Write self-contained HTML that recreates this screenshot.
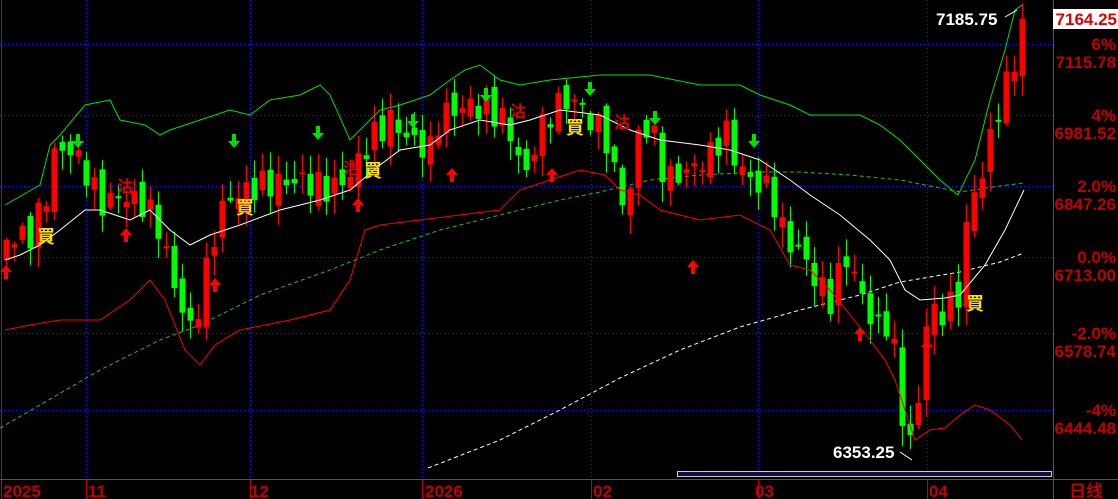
<!DOCTYPE html><html><head><meta charset="utf-8"><style>
html,body{margin:0;padding:0;background:#000;width:1118px;height:499px;overflow:hidden}
svg{display:block}
text{font-family:"Liberation Sans","Noto Sans CJK SC",sans-serif;font-weight:bold}
</style></head><body>
<svg id="s" width="1118" height="499" xmlns="http://www.w3.org/2000/svg">
<g stroke="#1a1aff" stroke-width="1" stroke-dasharray="1,3">
<line x1="0" y1="44.5" x2="1053" y2="44.5"/><line x1="0" y1="115.5" x2="1053" y2="115.5"/><line x1="0" y1="186.5" x2="1053" y2="186.5"/><line x1="0" y1="257.5" x2="1053" y2="257.5"/><line x1="0" y1="333.5" x2="1053" y2="333.5"/><line x1="0" y1="410.5" x2="1053" y2="410.5"/>
<line x1="86.5" y1="0" x2="86.5" y2="479"/><line x1="250.5" y1="0" x2="250.5" y2="479"/><line x1="422.5" y1="0" x2="422.5" y2="479"/><line x1="591.5" y1="0" x2="591.5" y2="479"/><line x1="758.5" y1="0" x2="758.5" y2="479"/><line x1="927.5" y1="0" x2="927.5" y2="479"/>
</g>
<line x1="1.5" y1="0" x2="1.5" y2="499" stroke="#c00" />
<line x1="1053.5" y1="0" x2="1053.5" y2="499" stroke="#a020a0"/>
<line x1="0" y1="479.5" x2="1118" y2="479.5" stroke="#a020a0"/>
<rect x="677.5" y="471.5" width="374" height="5" fill="#101040" stroke="#ccc"/>
<g id="c"></g>
<g fill="#c00000" font-size="17" text-anchor="end">
<text x="1116" y="50">6%</text><text x="1116" y="68">7115.78</text>
<text x="1116" y="121">4%</text><text x="1116" y="139">6981.52</text>
<text x="1116" y="192">2.0%</text><text x="1116" y="210">6847.26</text>
<text x="1116" y="263">0.0%</text><text x="1116" y="281">6713.00</text>
<text x="1116" y="339">-2.0%</text><text x="1116" y="357">6578.74</text>
<text x="1116" y="416">-4%</text><text x="1116" y="434">6444.48</text>
</g>
<rect x="1053" y="9" width="65" height="20" fill="#fff"/>
<text x="1117" y="25" fill="#e00000" font-size="17" text-anchor="end">7164.25</text>
<text x="936" y="25" fill="#fff" font-size="17">7185.75</text>
<line x1="1005" y1="17" x2="1017" y2="10" stroke="#fff"/>
<text x="833" y="458" fill="#fff" font-size="17">6353.25</text>
<line x1="900" y1="452" x2="912" y2="460" stroke="#fff"/>
<g fill="#c00000" font-size="17">
<text x="3" y="497">2025</text><text x="88" y="497">11</text><text x="250" y="497">12</text><text x="425" y="497">2026</text><text x="593" y="497">02</text><text x="755" y="497">03</text><text x="929" y="497">04</text>
<text x="1069" y="497" font-weight="normal">日线</text>
</g>
<g stroke="#c00000"><line x1="86.5" y1="480" x2="86.5" y2="499"/><line x1="250.5" y1="480" x2="250.5" y2="499"/><line x1="422.5" y1="480" x2="422.5" y2="499"/><line x1="591.5" y1="480" x2="591.5" y2="499"/><line x1="758.5" y1="480" x2="758.5" y2="499"/><line x1="927.5" y1="480" x2="927.5" y2="499"/></g>
<g font-size="18" fill="#ffe000" font-weight="bold">
<text x="37" y="243">買</text><text x="236" y="214">買</text><text x="364" y="177">買</text><text x="566" y="134">買</text><text x="966" y="310">買</text>
</g>
<g font-size="16" fill="#e00000">
<text x="117" y="192">沽</text><text x="343" y="174">沽</text><text x="510" y="117">沽</text><text x="614" y="128">沽</text>
</g>
</svg>
<script>
function interp(p,x){for(var i=1;i<p.length;i++){if(x<=p[i][0]){var a=p[i-1],b=p[i];return a[1]+(b[1]-a[1])*(x-a[0])/(b[0]-a[0]);}}return p[p.length-1][1];}
function pl(p,col,dash){var d="";for(var i=0;i<p.length;i++)d+=(i?" L":"M")+p[i][0]+","+p[i][1];return '<path d="'+d+'" fill="none" stroke="'+col+'" stroke-width="1"'+(dash?' stroke-dasharray="'+dash+'"':'')+'/>';}
var K=[[6,240],[30,235],[45,200],[55,150],[70,150],[85,170],[100,205],[120,195],[145,205],[160,230],[175,290],[190,330],[200,300],[215,230],[225,200],[260,185],[300,180],[330,190],[350,175],[370,140],[390,120],[410,140],[430,150],[440,115],[470,105],[500,115],[515,145],[525,180],[535,140],[555,105],[575,100],[590,120],[605,135],[620,200],[630,190],[640,120],[655,140],[665,180],[690,170],[710,155],[725,130],[735,160],[750,180],[770,190],[785,240],[800,250],[815,280],[830,300],[845,255],[860,290],[875,330],[890,320],[905,440],[915,440],[925,320],[945,310],[960,295],[968,205],[980,180],[990,140],[1000,100],[1012,70],[1022,25]];
var h="";
var UP=[[5,205],[40,185],[50,145],[60,135],[85,105],[110,100],[120,120],[145,125],[160,135],[170,130],[185,125],[200,120],[230,110],[250,115],[270,100],[300,95],[320,85],[330,95],[350,140],[365,125],[380,110],[400,105],[430,95],[450,80],[465,70],[480,65],[500,80],[520,85],[550,80],[600,75],[650,75],[700,85],[740,85],[760,95],[790,105],[810,115],[860,115],[880,125],[900,140],[920,160],[940,180],[958,195],[975,160],[990,100],[1005,50],[1015,10],[1022,5]];
var MA=[[5,260],[20,255],[40,245],[60,230],[85,210],[100,210],[130,220],[150,210],[170,230],[190,245],[210,235],[240,225],[280,210],[320,200],[350,190],[380,165],[400,150],[430,145],[450,130],[480,120],[510,125],[530,120],[560,110],[600,115],[630,130],[660,140],[700,145],[730,150],[760,160],[790,180],[810,195],[840,215],[870,240],[890,260],[905,290],[920,300],[945,298],[960,295],[985,265],[1005,230],[1024,190]];
var LO=[[5,330],[30,325],[60,320],[100,320],[130,300],[150,280],[165,300],[185,350],[200,365],[215,345],[240,330],[290,320],[330,310],[350,280],[365,230],[380,225],[420,220],[460,215],[500,210],[520,190],[550,180],[580,170],[605,175],[620,190],[640,195],[660,210],[700,220],[740,215],[770,230],[790,265],[810,270],[830,290],[850,315],[870,340],[885,360],[895,380],[905,410],[915,440],[930,430],[945,428],[960,415],[975,405],[990,410],[1010,425],[1022,440]];
var GD=[[0,428],[40,405],[100,370],[160,340],[200,325],[260,295],[330,270],[380,250],[440,230],[500,215],[560,200],[600,192],[650,180],[700,175],[760,172],[800,172],[850,175],[900,180],[960,192],[1000,186],[1024,183]];
var WD=[[428,468],[500,440],[560,410],[620,378],[680,350],[740,327],[800,310],[860,295],[900,282],[960,272],[1000,262],[1024,253]];
h+=pl(GD,"#20c020","4,3")+pl(WD,"#fff","4,3");
var prev=interp(K,6);
for(var i=0;i<128;i++){var x=6+i*8;var c=interp(K,x)+Math.sin(i*2.7)*14;var o=prev+Math.sin(i*1.3+1)*10;if(i==0)o=c+20;
var up=c<o;var col=up?"#ff0000":"#00ff00";var t=Math.min(o,c),b=Math.max(o,c);if(b-t<2)b=t+2;
var wt=t-Math.abs(Math.sin(i*3.1))*16-2,wb=b+Math.abs(Math.cos(i*2.3))*18+2;
h+='<line x1="'+(x+0.5)+'" y1="'+wt+'" x2="'+(x+0.5)+'" y2="'+wb+'" stroke="'+col+'"/>';
h+='<rect x="'+(x-2.5)+'" y="'+t+'" width="6" height="'+(b-t)+'" fill="'+col+'"/>';prev=c;}
h+=pl(UP,"#00e000")+pl(MA,"#fff")+pl(LO,"#ff0000");
function arr(x,y,up){var col=up?"#ff0000":"#00e000";if(up)return '<path d="M'+x+','+y+' l-6,7 h4 v7 h4 v-7 h4z" fill="'+col+'"/>';return '<path d="M'+x+','+y+' l-6,-7 h4 v-7 h4 v7 h4z" fill="'+col+'"/>';}
[[6,265],[126,228],[215,278],[358,198],[452,168],[552,168],[693,260],[860,327],[927,340]].forEach(function(a){h+=arr(a[0],a[1],1)});
[[78,148],[234,148],[318,140],[413,128],[486,102],[590,96],[655,125],[754,148]].forEach(function(a){h+=arr(a[0],a[1],0)});
document.getElementById("c").innerHTML=h;
</script>
</body></html>
